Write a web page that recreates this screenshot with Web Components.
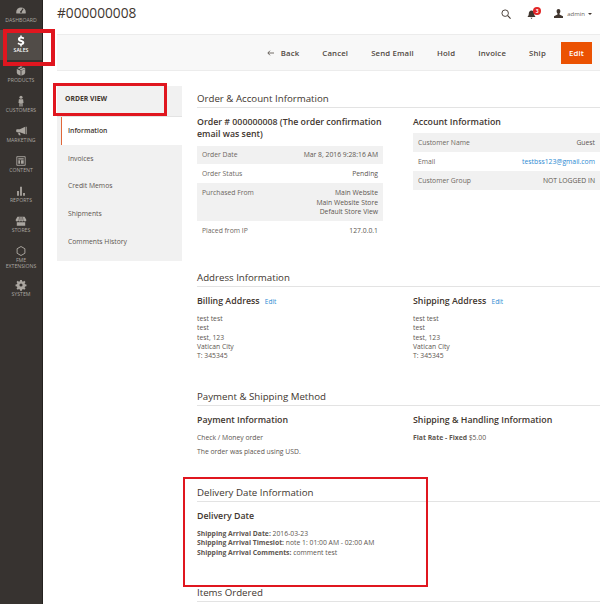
<!doctype html>
<html lang="en">
<head>
<meta charset="utf-8">
<title>#000000008</title>
<style>
  html, body { margin: 0; height: 604px; overflow: hidden; background: #fff; }
  body { font-family: "Open Sans", "Liberation Sans", sans-serif; color: #41362f; }
  .shell { display: grid; grid-template-columns: 43px 1fr; height: 604px; position: relative; }
  .content { min-width: 0; padding: 0 2px 0 14px; }
  .columns { display: grid; grid-template-columns: 125px 1fr; gap: 15px; margin-top: 15px; }
  .main { min-width: 0; padding-top: 5px; }
</style>
</head>
<body>
<div class="shell">
  <admin-nav>
    <nav-item label="Dashboard" icon="dashboard"></nav-item>
    <nav-item label="Sales" icon="sales" active></nav-item>
    <nav-item label="Products" icon="products"></nav-item>
    <nav-item label="Customers" icon="customers"></nav-item>
    <nav-item label="Marketing" icon="marketing"></nav-item>
    <nav-item label="Content" icon="content"></nav-item>
    <nav-item label="Reports" icon="reports"></nav-item>
    <nav-item label="Stores" icon="stores"></nav-item>
    <nav-item label="FME Extensions" icon="fme"></nav-item>
    <nav-item label="System" icon="system"></nav-item>
  </admin-nav>
  <div class="content">
    <page-header title-text="#000000008" user="admin" count="3"></page-header>
    <action-toolbar actions="Cancel,Send Email,Hold,Invoice,Ship" primary="Edit"></action-toolbar>
    <div class="columns">
      <side-tabs heading="Order View" tabs="Information,Invoices,Credit Memos,Shipments,Comments History"></side-tabs>
      <div class="main">
        <info-section heading="Order &amp; Account Information" style="--section-h:179px">
          <info-block heading="Order # 000000008 (The order confirmation email was sent)">
            <info-table rows='[["Order Date","Mar 8, 2016 9:28:16 AM"],["Order Status","Pending"],["Purchased From","Main Website<br>Main Website Store<br>Default Store View"],["Placed from IP","127.0.0.1"]]'></info-table>
          </info-block>
          <info-block heading="Account Information">
            <info-table rows='[["Customer Name","Guest"],["Email","<a>testbss123@gmail.com</a>"],["Customer Group","NOT LOGGED IN"]]'></info-table>
          </info-block>
        </info-section>
        <info-section heading="Address Information" style="--section-h:119px">
          <info-block heading="Billing Address" edit>test test<br>test<br>test, 123<br>Vatican City<br>T: 345345</info-block>
          <info-block heading="Shipping Address" edit>test test<br>test<br>test, 123<br>Vatican City<br>T: 345345</info-block>
        </info-section>
        <info-section heading="Payment &amp; Shipping Method" style="--section-h:96px">
          <info-block heading="Payment Information">
            <div>Check / Money order</div>
            <div style="margin-top:4.600px">The order was placed using USD.</div>
          </info-block>
          <info-block heading="Shipping &amp; Handling Information"><b style="font-weight:700">Flat Rate - Fixed</b> $5.00</info-block>
        </info-section>
        <info-section heading="Delivery Date Information" style="--section-h:100px">
          <info-block heading="Delivery Date" wide>
            <b style="font-weight:700">Shipping Arrival Date:</b> 2016-03-23<br>
            <b style="font-weight:700">Shipping Arrival Timeslot:</b> note 1: 01:00 AM - 02:00 AM<br>
            <b style="font-weight:700">Shipping Arrival Comments:</b> comment test
          </info-block>
        </info-section>
        <info-section heading="Items Ordered" style="--section-h:19px"></info-section>
      </div>
    </div>
  </div>
  <mark-box style="left:3px;top:29px;width:52px;height:37px;--w:4px"></mark-box>
  <mark-box style="left:53px;top:83px;width:114px;height:33px;--w:3px"></mark-box>
  <mark-box style="left:183px;top:477px;width:245px;height:110px;--w:2px"></mark-box>
</div>

<script>
const ICONS = {
  dashboard: `<path fill="currentColor" d="M2 12a8 8 0 1 1 16 0c0 .7-.1 1.400-.3 2H2.300A8 8 0 0 1 2 12Z"/><path stroke="#373330" stroke-width="1.800" fill="none" d="M10 11.500 13.500 6"/><circle cx="10" cy="11.500" r="1.600" fill="#373330"/>`,
  sales: `<path fill="#fff" d="M8.700 1h2.600v2c1.700.2 3 .7 4.100 1.400l-1.100 2.600c-1.300-.8-2.700-1.300-4.100-1.300-1.200 0-1.800.4-1.800 1 0 .7.800 1 2.500 1.500 2.700.8 4.600 1.800 4.600 4.400 0 2.300-1.600 3.700-4.200 4.100V19H8.700v-2.300c-1.800-.2-3.400-.8-4.500-1.600l1.200-2.600c1.400.9 3 1.500 4.500 1.500 1.300 0 2-.4 2-1.200 0-.8-.8-1.100-2.700-1.700-2.500-.8-4.300-1.800-4.300-4.200 0-2.100 1.500-3.500 3.800-3.900Z"/>`,
  products: `<path fill="currentColor" d="M10 2 13 3.500 7 6.500 4 5ZM14.500 4.200 17.500 5.700 10 9 7.800 7.500ZM3 6.500l6.300 3.200V18L4.200 15.500 3 13ZM17 6.800V13l-1.200 2.500-5.100 2.500V9.700Z"/>`,
  customers: `<circle cx="10" cy="3.800" r="2.600" fill="currentColor"/><path fill="currentColor" d="M6.500 7.200h7l.7 6.300h-1.500V19h-2.100v-5h-1.200v5H7.300v-5.500H5.800Z"/>`,
  marketing: `<path fill="currentColor" d="M17 3v12.500L8 12H3.500A1.500 1.500 0 0 1 2 10.500v-2A1.500 1.500 0 0 1 3.500 7H8ZM18 3h1.500v12.500H18ZM5 12.800h3l1.500 4.200h-3Z"/>`,
  content: `<path fill="none" stroke="currentColor" stroke-width="1.500" d="M3 2.800h14v14.400H3Z"/><path fill="currentColor" d="M5.500 5.300h9v2h-9ZM5.500 8.800h3v5.900h-3ZM10 8.800h4.500v5.900H10Z"/>`,
  reports: `<path fill="currentColor" d="M3.500 10h3v8h-3ZM8.500 3h3v15h-3ZM13.500 13.500h3V18h-3Z"/>`,
  stores: `<path fill="currentColor" d="M4 3h12l3 5.500c0 1.600-1.100 2.300-2.200 2.300-1 0-1.900-.6-2.200-1.500-.4.900-1.300 1.500-2.300 1.500s-1.900-.6-2.300-1.500c-.4.900-1.300 1.500-2.300 1.500s-1.900-.6-2.300-1.500c-.3.900-1.200 1.500-2.200 1.500C2.100 10.800 1 10.100 1 8.500ZM3 12h14v6H3Z"/><path stroke="#373330" stroke-width=".9" d="M7.500 3.500 6.500 9M10 3.500V9M12.500 3.500l1 5.500"/>`,
  fme: `<path fill="none" stroke="currentColor" stroke-width="1.600" d="M10 2.500 16.500 6.200v7.600L10 17.500 3.500 13.800V6.200Z"/>`,
  system: `<path fill="currentColor" fill-rule="evenodd" d="M8.500 1.500h3l.4 2.400 1.500.6 2-1.400 2.100 2.100-1.400 2 .6 1.500 2.400.4v3l-2.400.4-.6 1.500 1.400 2-2.100 2.100-2-1.400-1.500.6-.4 2.400h-3l-.4-2.400-1.500-.6-2 1.400-2.100-2.100 1.400-2-.6-1.500-2.400-.4v-3l2.400-.4.6-1.500-1.400-2 2.100-2.100 2 1.400 1.500-.6ZM10 7.400a2.600 2.600 0 1 0 0 5.200 2.600 2.600 0 0 0 0-5.200Z"/>`,
};

class AdminNav extends HTMLElement {
  constructor() {
    super();
    this.attachShadow({ mode: "open" }).innerHTML = `
      <style>
        :host { display: flex; flex-direction: column; background: #373330; border-right: 1px solid #25221f; height: 604px; box-sizing: border-box; }
      </style>
      <slot></slot>`;
  }
}

class NavItem extends HTMLElement {
  connectedCallback() {
    this.attachShadow({ mode: "open" }).innerHTML = `
      <style>
        :host { display: block; height: 30px; box-sizing: border-box; color: #aaa6a0; text-align: center; }
        :host([active]) { background: #514c48; color: #fff; }
        :host([label^="FME"]) { height: 34px; }
        .icon { display: flex; height: 17px; align-items: flex-end; justify-content: center; }
        svg { width: 12px; height: 12px; display: block; }
        .label { font: 400 5.200px/6.300px "Open Sans", sans-serif; text-transform: uppercase; padding: 0 4px; }
        :host([active]) .label { font-weight: 600; }
      </style>
      <div class="icon"><svg viewBox="0 0 20 20" aria-hidden="true">${ICONS[this.getAttribute("icon")] || ""}</svg></div>
      <div class="label">${this.getAttribute("label")}</div>`;
  }
}

class PageHeader extends HTMLElement {
  connectedCallback() {
    this.attachShadow({ mode: "open" }).innerHTML = `
      <style>
        :host { display: flex; align-items: center; height: 27px; padding-right: 8px; }
        h1 { font: 400 13.700px/20px "Open Sans", sans-serif; color: #41362f; margin: 0; flex: 1; transform: translateY(-1px); }
        .search { width: 10px; height: 10px; margin-right: 16px; }
        .bell { position: relative; width: 12px; height: 12px; margin-right: 15px; }
        .bell svg { width: 9px; height: 9px; position: absolute; left: 0; top: 2px; }
        .badge { position: absolute; left: 6px; top: -1px; width: 8px; height: 8px; border-radius: 50%; background: #e22626; color: #fff; font: 700 5px/8px "Open Sans", sans-serif; text-align: center; }
        .user { width: 9px; height: 9px; margin-right: 4px; }
        .name { font: 400 6px/10px "Open Sans", sans-serif; color: #6b6560; margin-right: 3px; }
        .caret { width: 0; height: 0; border: 2px solid transparent; border-top: 2.500px solid #41362f; border-bottom: 0; }
      </style>
      <h1>${this.getAttribute("title-text")}</h1>
      <svg class="search" viewBox="0 0 12 12" aria-hidden="true"><circle cx="5" cy="5" r="3.900" fill="none" stroke="#41362f" stroke-width="1.100"/><path d="M8 8l3.500 3.500" stroke="#41362f" stroke-width="1.300"/></svg>
      <div class="bell">
        <svg viewBox="0 0 10 10" aria-hidden="true"><path fill="#41362f" d="M5 .5C3 .5 2 2 2 4c0 2-.6 3-1.500 3.800h9C8.600 7 8 6 8 4 8 2 7 .5 5 .5ZM3.800 8.500h2.400L5 10Z"/></svg>
        <span class="badge">${this.getAttribute("count")}</span>
      </div>
      <svg class="user" viewBox="0 0 10 10" aria-hidden="true"><path fill="#41362f" d="M5 0c1.300 0 2.100 1 2.100 2.400 0 1-.4 2-1 2.500v1.300L10 8v2H0V8l3.900-1.800V4.900c-.6-.5-1-1.500-1-2.500C2.900 1 3.700 0 5 0Z"/></svg>
      <span class="name">${this.getAttribute("user")}</span>
      <span class="caret"></span>`;
  }
}

class ActionToolbar extends HTMLElement {
  connectedCallback() {
    const actions = this.getAttribute("actions").split(",");
    this.attachShadow({ mode: "open" }).innerHTML = `
      <style>
        :host { display: flex; align-items: center; justify-content: flex-end; gap: 23px; height: 37px; margin-top: 7px; padding-right: 8px; background: #f8f8f8; border-top: 1px solid #ececec; border-bottom: 1px solid #ececec; box-sizing: border-box; font: 600 7.800px/12px "Open Sans", sans-serif; letter-spacing: .15px; color: #514943; }
        .back { display: flex; align-items: center; gap: 7px; }
        .back svg { width: 7px; height: 6px; }
        .primary { background: #eb5202; color: #fff; height: 22px; line-height: 22px; padding: 0 8px; margin-left: -8px; }
      </style>
      <span class="back"><svg viewBox="0 0 7 6" aria-hidden="true"><path d="M7 3H1M3 .7.800 3 3 5.300" fill="none" stroke="#514943" stroke-width=".8"/></svg>Back</span>
      ${actions.map((a) => `<span>${a}</span>`).join("")}
      <span class="primary">${this.getAttribute("primary")}</span>`;
  }
}

class SideTabs extends HTMLElement {
  connectedCallback() {
    const tabs = this.getAttribute("tabs").split(",");
    this.attachShadow({ mode: "open" }).innerHTML = `
      <style>
        :host { display: block; height: 175px; background: #f1f1f1; font: 400 6.800px/12px "Open Sans", sans-serif; color: #5d5650; }
        h2 { margin: 0; height: 31px; padding-left: 8px; font: 700 6.800px/26px "Open Sans", sans-serif; text-transform: uppercase; color: #41362f; border-bottom: 1px solid #e3e3e3; box-sizing: border-box; }
        ul { list-style: none; margin: 0; padding: 0; }
        li { height: 27.700px; line-height: 27.700px; padding-left: 11px; }
        li.on { background: #fff; margin-left: 4px; padding-left: 6px; border-left: 1.500px solid #e0673a; font-weight: 600; color: #41362f; }
      </style>
      <h2>${this.getAttribute("heading")}</h2>
      <ul>${tabs.map((t, i) => `<li class="${i === 0 ? "on" : ""}">${t}</li>`).join("")}</ul>`;
  }
}

class InfoSection extends HTMLElement {
  connectedCallback() {
    this.attachShadow({ mode: "open" }).innerHTML = `
      <style>
        :host { display: block; height: var(--section-h); }
        h2 { margin: 0; height: 17px; font: 400 9.700px/15px "Open Sans", sans-serif; color: #41362f; border-bottom: 1px solid #e3e3e3; box-sizing: border-box; }
        .grid { display: grid; grid-template-columns: 186px 187px; column-gap: 30px; padding-top: 7.500px; }
      </style>
      <h2>${this.getAttribute("heading")}</h2>
      <div class="grid"><slot></slot></div>`;
  }
}

class InfoBlock extends HTMLElement {
  connectedCallback() {
    const edit = this.hasAttribute("edit") ? `<a>Edit</a>` : "";
    this.attachShadow({ mode: "open" }).innerHTML = `
      <style>
        :host { display: block; font: 400 6.800px/9.300px "Open Sans", sans-serif; color: #5d5650; }
        :host([wide]) { grid-column: 1 / -1; }
        h3 { margin: 0 0 7.200px; font: 600 8.800px/12.400px "Open Sans", sans-serif; color: #41362f; }
        a { font: 400 6.500px/9px "Open Sans", sans-serif; color: #2b8ad2; margin-left: 3px; }
      </style>
      <h3>${this.getAttribute("heading")} ${edit}</h3>
      <slot></slot>`;
  }
}

class InfoTable extends HTMLElement {
  connectedCallback() {
    const rows = JSON.parse(this.getAttribute("rows"));
    this.attachShadow({ mode: "open" }).innerHTML = `
      <style>
        :host { display: block; margin-top: -2px; font: 400 6.800px/9.300px "Open Sans", sans-serif; color: #5d5650; }
        .row { display: flex; justify-content: space-between; padding: 4.900px 5px 4.800px; }
        .row:nth-of-type(odd) { background: #f1f1f1; }
        .k { color: #6e6861; }
        .v { text-align: right; }
        a { color: #2b8ad2; }
      </style>
      ${rows.map(([k, v]) => `<div class="row"><span class="k">${k}</span><span class="v">${v}</span></div>`).join("")}`;
  }
}

class MarkBox extends HTMLElement {
  constructor() {
    super();
    this.attachShadow({ mode: "open" }).innerHTML = `
      <style>
        :host { display: block; position: absolute; box-sizing: border-box; border: var(--w) solid #e0161f; pointer-events: none; }
      </style>`;
  }
}

customElements.define("admin-nav", AdminNav);
customElements.define("nav-item", NavItem);
customElements.define("page-header", PageHeader);
customElements.define("action-toolbar", ActionToolbar);
customElements.define("side-tabs", SideTabs);
customElements.define("info-section", InfoSection);
customElements.define("info-block", InfoBlock);
customElements.define("info-table", InfoTable);
customElements.define("mark-box", MarkBox);
</script>
</body>
</html>
